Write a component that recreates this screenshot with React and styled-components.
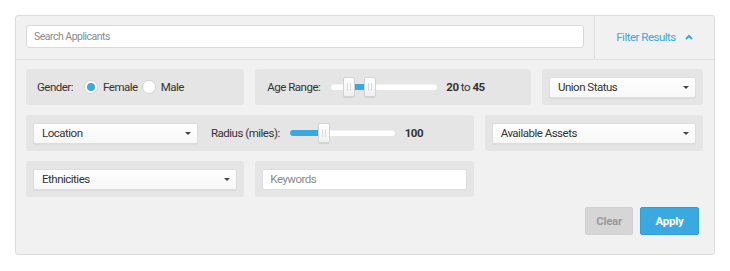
import React from 'react'
import styled, {createGlobalStyle} from 'styled-components'

const GlobalStyle = createGlobalStyle`
  html, body {
    margin: 0;
    padding: 0;
    background: #ffffff;
  }
  body {
    font-family: Roboto, "Liberation Sans", sans-serif;
    font-size: 11.5px;
    letter-spacing: -0.5px;
    color: #333333;
  }
  * {
    box-sizing: border-box;
  }
`;

const BLUE = '#3aa9e0';

const Panel = styled.div`
  margin: 15px;
  width: 700px;
  border: 1px solid #dcdcdc;
  border-radius: 3px;
  background-color: #f1f1f1;
`;

const Header = styled.div`
  display: flex;
  height: 44px;
  border-bottom: 1px solid #dedede;
`;

const SearchWrap = styled.div`
  flex: 1;
  padding: 9px 10px 0 10px;
`;

const SearchInput = styled.input`
  width: 100%;
  height: 23px;
  border: 1px solid #d9d9d9;
  border-radius: 3px;
  background: #ffffff;
  padding: 0 7px;
  font-family: inherit;
  font-size: 10.5px;
  letter-spacing: -0.5px;
  color: #333;
  outline: none;
  &::placeholder {
    color: #8a8a8a;
  }
`;

const FilterToggle = styled.div`
  width: 120px;
  border-left: 1px solid #dedede;
  display: flex;
  align-items: center;
  justify-content: center;
  gap: 9px;
  color: ${BLUE};
  font-size: 11.5px;
  padding-bottom: 1px;
`;

const Body = styled.div`
  padding: 9px 11px 19px 10px;
`;

const Grid = styled.div`
  display: grid;
  grid-template-columns: repeat(12, 1fr);
  column-gap: 11px;
  row-gap: 10px;
`;

const Box = styled.div`
  grid-column: span ${p => p.$span};
  height: 36px;
  background-color: #e5e5e5;
  border-radius: 3px;
  display: flex;
  align-items: center;
  padding: 0 ${p => p.$pad || 7}px;
`;

const Label = styled.span`
  color: #333;
  margin-right: ${p => p.$gap || 0}px;
  margin-left: ${p => p.$left || 0}px;
  white-space: nowrap;
`;

const RadioItem = styled.label`
  display: flex;
  align-items: center;
  gap: 5px;
  margin-right: 4px;
`;

const RadioCircle = styled.span`
  width: 14px;
  height: 14px;
  border-radius: 50%;
  background: #ffffff;
  border: 1px solid #d4d4d4;
  display: flex;
  align-items: center;
  justify-content: center;
  &::after {
    content: '';
    width: 8px;
    height: 8px;
    border-radius: 50%;
    background: ${p => (p.$checked ? BLUE : 'transparent')};
  }
`;

const Track = styled.div`
  position: relative;
  width: ${p => p.$width}px;
  height: 6px;
  border-radius: 3px;
  background: #ffffff;
  box-shadow: inset 0 1px 1px rgba(0, 0, 0, 0.06);
  flex-shrink: 0;
`;

const Fill = styled.div`
  position: absolute;
  top: 0;
  height: 6px;
  background: ${BLUE};
  border-radius: ${p => (p.$round ? '3px 0 0 3px' : '0')};
`;

const Handle = styled.div`
  position: absolute;
  top: -7px;
  width: 12px;
  height: 20px;
  border: 1px solid #d2d2d2;
  border-radius: 2px;
  background: linear-gradient(#ffffff, #f0f0f0);
  box-shadow: 0 1px 1px rgba(0, 0, 0, 0.08);
  display: flex;
  align-items: center;
  justify-content: center;
  gap: 2px;
  &::before, &::after {
    content: '';
    width: 1px;
    height: 8px;
    background: #dcdcdc;
  }
`;

const Value = styled.span`
  margin-left: ${p => p.$gap}px;
  color: #333;
  b {
    font-weight: bold;
  }
`;

const Select = styled.div`
  width: ${p => (p.$width ? `${p.$width}px` : '100%')};
  flex-shrink: 0;
  height: 21px;
  background: linear-gradient(#ffffff, #f7f7f7);
  border: 1px solid #dddddd;
  border-radius: 2px;
  box-shadow: 0 1px 1px rgba(0, 0, 0, 0.05);
  display: flex;
  align-items: center;
  justify-content: space-between;
  padding: 0 6px 0 8px;
  color: #333;
`;

const Caret = styled.span`
  width: 0;
  height: 0;
  border-left: 3px solid transparent;
  border-right: 3px solid transparent;
  border-top: 3px solid #444;
`;

const TextInput = styled.input`
  width: 100%;
  height: 21px;
  border: 1px solid #dddddd;
  border-radius: 2px;
  background: #ffffff;
  padding: 0 7px;
  font-family: inherit;
  font-size: 11.5px;
  letter-spacing: -0.5px;
  outline: none;
  &::placeholder {
    color: #8a8a8a;
  }
`;

const Actions = styled.div`
  display: flex;
  justify-content: flex-end;
  gap: 7px;
  margin-top: 10px;
  padding-right: 4px;
`;

const Button = styled.button`
  width: ${p => p.$width}px;
  height: 28px;
  padding: 0;
  border-radius: 2px;
  font-family: inherit;
  font-size: 11.5px;
  letter-spacing: -0.3px;
  font-weight: bold;
  cursor: pointer;
  border: 1px solid ${p => (p.$primary ? '#2f9fd8' : '#d0d0d0')};
  background: ${p => (p.$primary ? BLUE : '#d6d6d6')};
  color: ${p => (p.$primary ? '#ffffff' : '#9a9a9a')};
`;

const Chevron = () => (
  <svg width="8" height="6" viewBox="0 0 8 6">
    <path d="M1 5 L4 2 L7 5" fill="none" stroke={BLUE} strokeWidth="2"/>
  </svg>
);

const Dropdown = ({label, width}) => (
  <Select $width={width}>
    <span>{label}</span>
    <Caret/>
  </Select>
);

export default function App() {
  return (
    <>
      <GlobalStyle/>
      <Panel>
        <Header>
          <SearchWrap>
            <SearchInput placeholder="Search Applicants"/>
          </SearchWrap>
          <FilterToggle>
            <span>Filter Results</span>
            <Chevron/>
          </FilterToggle>
        </Header>
        <Body>
          <Grid>
            <Box $span={4} $pad={11}>
              <Label $gap={11}>Gender:</Label>
              <RadioItem><RadioCircle $checked/>Female</RadioItem>
              <RadioItem><RadioCircle/>Male</RadioItem>
            </Box>
            <Box $span={5} $pad={12}>
              <Label $gap={11}>Age Range:</Label>
              <Track $width={106}>
                <Fill style={{left: 24, width: 9}}/>
                <Handle style={{left: 12}}/>
                <Handle style={{left: 33}}/>
              </Track>
              <Value $gap={9}><b>20</b> to <b>45</b></Value>
            </Box>
            <Box $span={3}>
              <Dropdown label="Union Status"/>
            </Box>

            <Box $span={8}>
              <Dropdown label="Location" width={165}/>
              <Label $left={13} $gap={10}>Radius (miles):</Label>
              <Track $width={105}>
                <Fill $round style={{left: 0, width: 30}}/>
                <Handle style={{left: 28}}/>
              </Track>
              <Value $gap={10}><b>100</b></Value>
            </Box>
            <Box $span={4}>
              <Dropdown label="Available Assets"/>
            </Box>

            <Box $span={4}>
              <Dropdown label="Ethnicities"/>
            </Box>
            <Box $span={4}>
              <TextInput placeholder="Keywords"/>
            </Box>
          </Grid>
          <Actions>
            <Button $width={48}>Clear</Button>
            <Button $primary $width={59}>Apply</Button>
          </Actions>
        </Body>
      </Panel>
    </>
  )
}
